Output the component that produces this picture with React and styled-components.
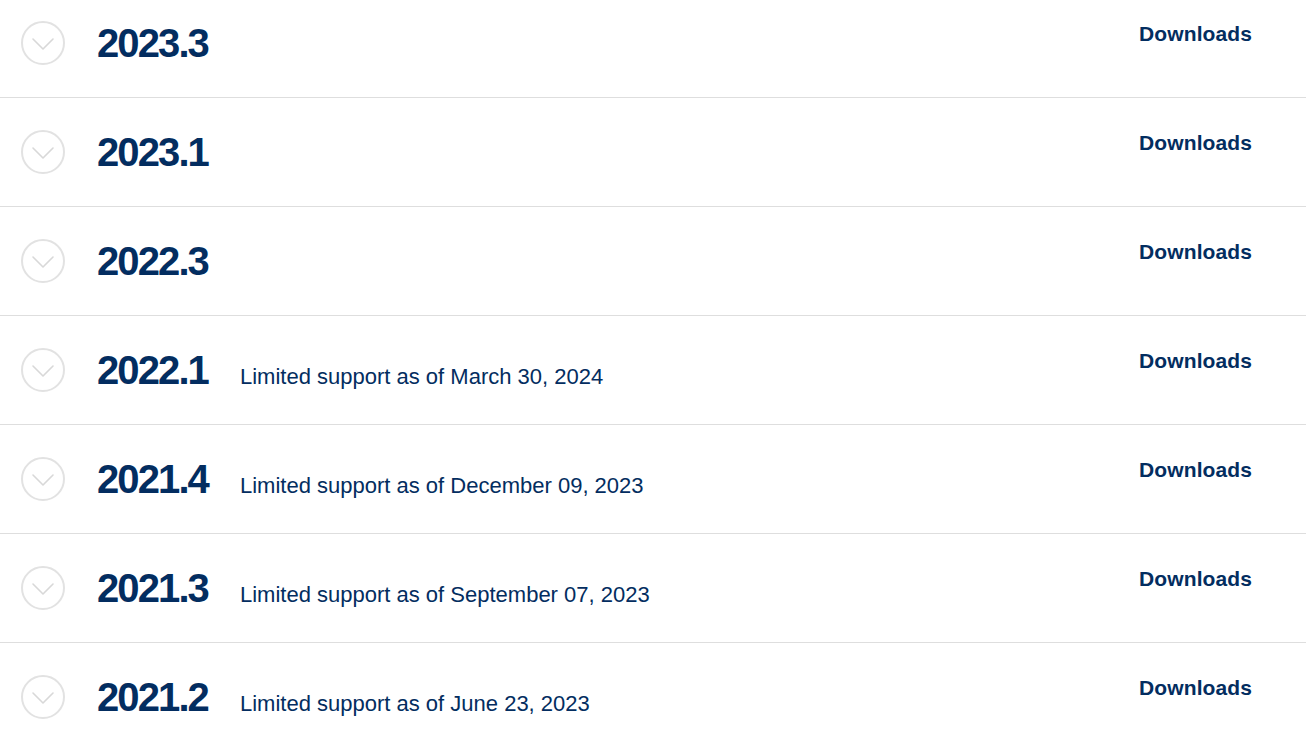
import React from 'react';
import styled, { createGlobalStyle } from 'styled-components';

const GlobalStyle = createGlobalStyle`
  body {
    margin: 0;
    background: #fff;
    font-family: "Liberation Sans", Arial, sans-serif;
    color: #032d60;
  }
`;

const releases = [
  { version: '2023.3' },
  { version: '2023.1' },
  { version: '2022.3' },
  { version: '2022.1', note: 'Limited support as of March 30, 2024' },
  { version: '2021.4', note: 'Limited support as of December 09, 2023' },
  { version: '2021.3', note: 'Limited support as of September 07, 2023' },
  { version: '2021.2', note: 'Limited support as of June 23, 2023' },
];

const Chevron = () => (
  <svg width="24" height="14" viewBox="0 0 24 14" fill="none">
    <path d="M2 2 L12 12 L22 2" stroke="#d8d8d8" strokeWidth="1.6" strokeLinecap="round" strokeLinejoin="round" />
  </svg>
);

const Release = ({ version, note }) => (
  <Row>
    <Toggle aria-label={`Expand ${version}`}>
      <Chevron />
    </Toggle>
    <Heading>
      <Version>{version}</Version>
      {note && <Note>{note}</Note>}
    </Heading>
    <DownloadLink href="#">Downloads</DownloadLink>
  </Row>
);

const App = () => (
  <>
    <GlobalStyle />
    <List>
      {releases.map((r) => (
        <Release key={r.version} {...r} />
      ))}
    </List>
  </>
);

const List = styled.div`
  margin-top: -11px;
  display: flex;
  flex-direction: column;
`;

const Row = styled.div`
  display: flex;
  align-items: flex-start;
  height: 109px;
  padding: 32px 54px 0 21px;
  border-bottom: 1px solid #dedede;
  box-sizing: border-box;
`;

const Toggle = styled.button`
  flex: none;
  width: 44px;
  height: 44px;
  border-radius: 50%;
  border: 2px solid #e2e2e2;
  background: #fff;
  padding: 2px 0 0;
  display: flex;
  align-items: center;
  justify-content: center;
  box-sizing: border-box;
  cursor: pointer;
`;

const Heading = styled.div`
  display: flex;
  align-items: baseline;
  margin-left: 32px;
  margin-top: 2px;
`;

const Version = styled.h2`
  margin: 0;
  width: 143px;
  font-size: 40px;
  line-height: 40px;
  font-weight: 700;
  letter-spacing: -1.9px;
  color: #032d60;
`;

const Note = styled.span`
  font-size: 22px;
  color: #032d60;
`;

const DownloadLink = styled.a`
  margin-left: auto;
  margin-top: 2px;
  font-size: 21px;
  line-height: 21px;
  font-weight: 700;
  letter-spacing: 0.1px;
  color: #032d60;
  text-decoration: none;
`;

export default App;
